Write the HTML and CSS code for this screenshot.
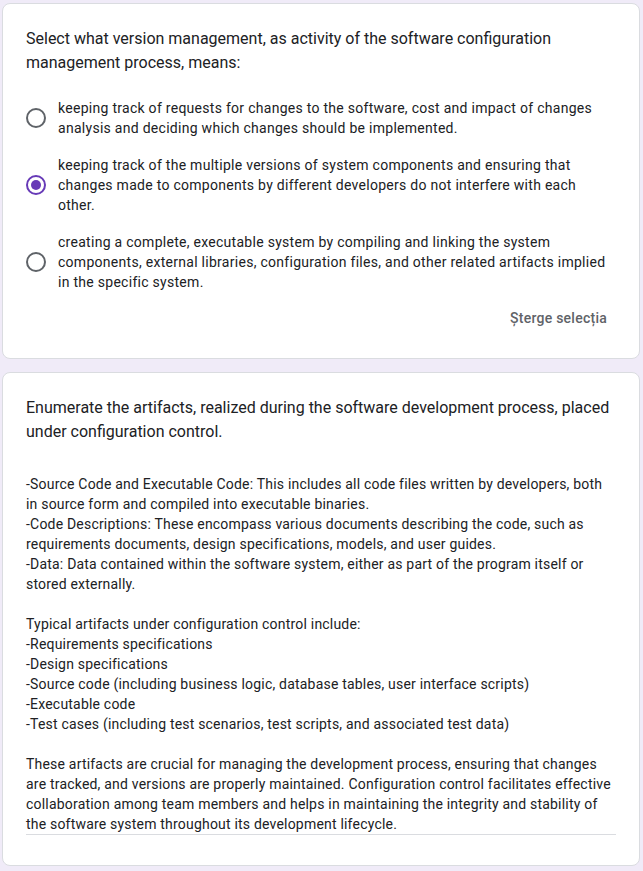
FILE: index.html
```html
<!DOCTYPE html>
<html lang="en">
<head>
<meta charset="utf-8">
<title>Form</title>
<link rel="stylesheet" href="styles.css">
</head>
<body>
<main class="page">
  <section class="card card-question">
    <div class="title">Select what version management, as activity of the software configuration management process, means:</div>
    <div class="options">
      <div class="option">
        <span class="radio"></span>
        <span class="label">keeping track of requests for changes to the software, cost and impact of changes analysis and deciding which changes should be implemented.</span>
      </div>
      <div class="option">
        <span class="radio checked"></span>
        <span class="label">keeping track of the multiple versions of system components and ensuring that changes made to components by different developers do not interfere with each other.</span>
      </div>
      <div class="option">
        <span class="radio"></span>
        <span class="label">creating a complete, executable system by compiling and linking the system components, external libraries, configuration files, and other related artifacts implied in the specific system.</span>
      </div>
    </div>
    <div class="actions"><span class="clear">Șterge selecția</span></div>
  </section>
  <section class="card card-answer">
    <div class="title">Enumerate the artifacts, realized during the software development process, placed under configuration control.</div>
    <div class="answer">-Source Code and Executable Code: This includes all code files written by developers, both in source form and compiled into executable binaries.
-Code Descriptions: These encompass various documents describing the code, such as requirements documents, design specifications, models, and user guides.
-Data: Data contained within the software system, either as part of the program itself or stored externally.

Typical artifacts under configuration control include:
-Requirements specifications
-Design specifications
-Source code (including business logic, database tables, user interface scripts)
-Executable code
-Test cases (including test scenarios, test scripts, and associated test data)

These artifacts are crucial for managing the development process, ensuring that changes are tracked, and versions are properly maintained. Configuration control facilitates effective collaboration among team members and helps in maintaining the integrity and stability of the software system throughout its development lifecycle.</div>
  </section>
</main>
</body>
</html>
```
FILE: styles.css
```css
html, body {
  margin: 0;
  padding: 0;
  background: #f0ebf8;
}
body {
  font-family: Roboto, "Liberation Sans", Arial, sans-serif;
  color: #202124;
}
.page {
  display: flex;
  flex-direction: column;
  gap: 13px;
  padding: 3px 3px 4px 2px;
}
.card {
  background: #fff;
  border: 1px solid #dadce0;
  border-radius: 8px;
  padding: 23px;
}
.card-question {
  padding-bottom: 22px;
}
.title {
  font-size: 16px;
  line-height: 24px;
  letter-spacing: 0;
  color: #202124;
}
.options {
  margin-top: 15px;
  display: flex;
  flex-direction: column;
  gap: 1px;
}
.option {
  display: flex;
  align-items: center;
  gap: 12px;
  padding: 8px 0;
}
.radio {
  flex: none;
  width: 16px;
  height: 16px;
  border: 2px solid #5f6368;
  border-radius: 50%;
  display: flex;
  align-items: center;
  justify-content: center;
}
.radio.checked {
  border-color: #673ab7;
}
.radio.checked::after {
  content: "";
  width: 10px;
  height: 10px;
  border-radius: 50%;
  background: #673ab7;
}
.label {
  font-size: 14px;
  line-height: 20px;
  letter-spacing: 0.28px;
  color: #202124;
  margin-right: 8px;
}
.actions {
  display: flex;
  justify-content: flex-end;
  height: 36px;
  align-items: center;
}
.clear {
  font-size: 14px;
  font-weight: 500;
  color: #5f6368;
  letter-spacing: 0.25px;
  padding: 0 9px;
}
.card-answer {
  padding-bottom: 30px;
}
.answer {
  margin-top: 30px;
  font-size: 14px;
  line-height: 20px;
  letter-spacing: 0.2px;
  white-space: pre-wrap;
  color: #202124;
  border-bottom: 1px solid #dadce0;
}
```
